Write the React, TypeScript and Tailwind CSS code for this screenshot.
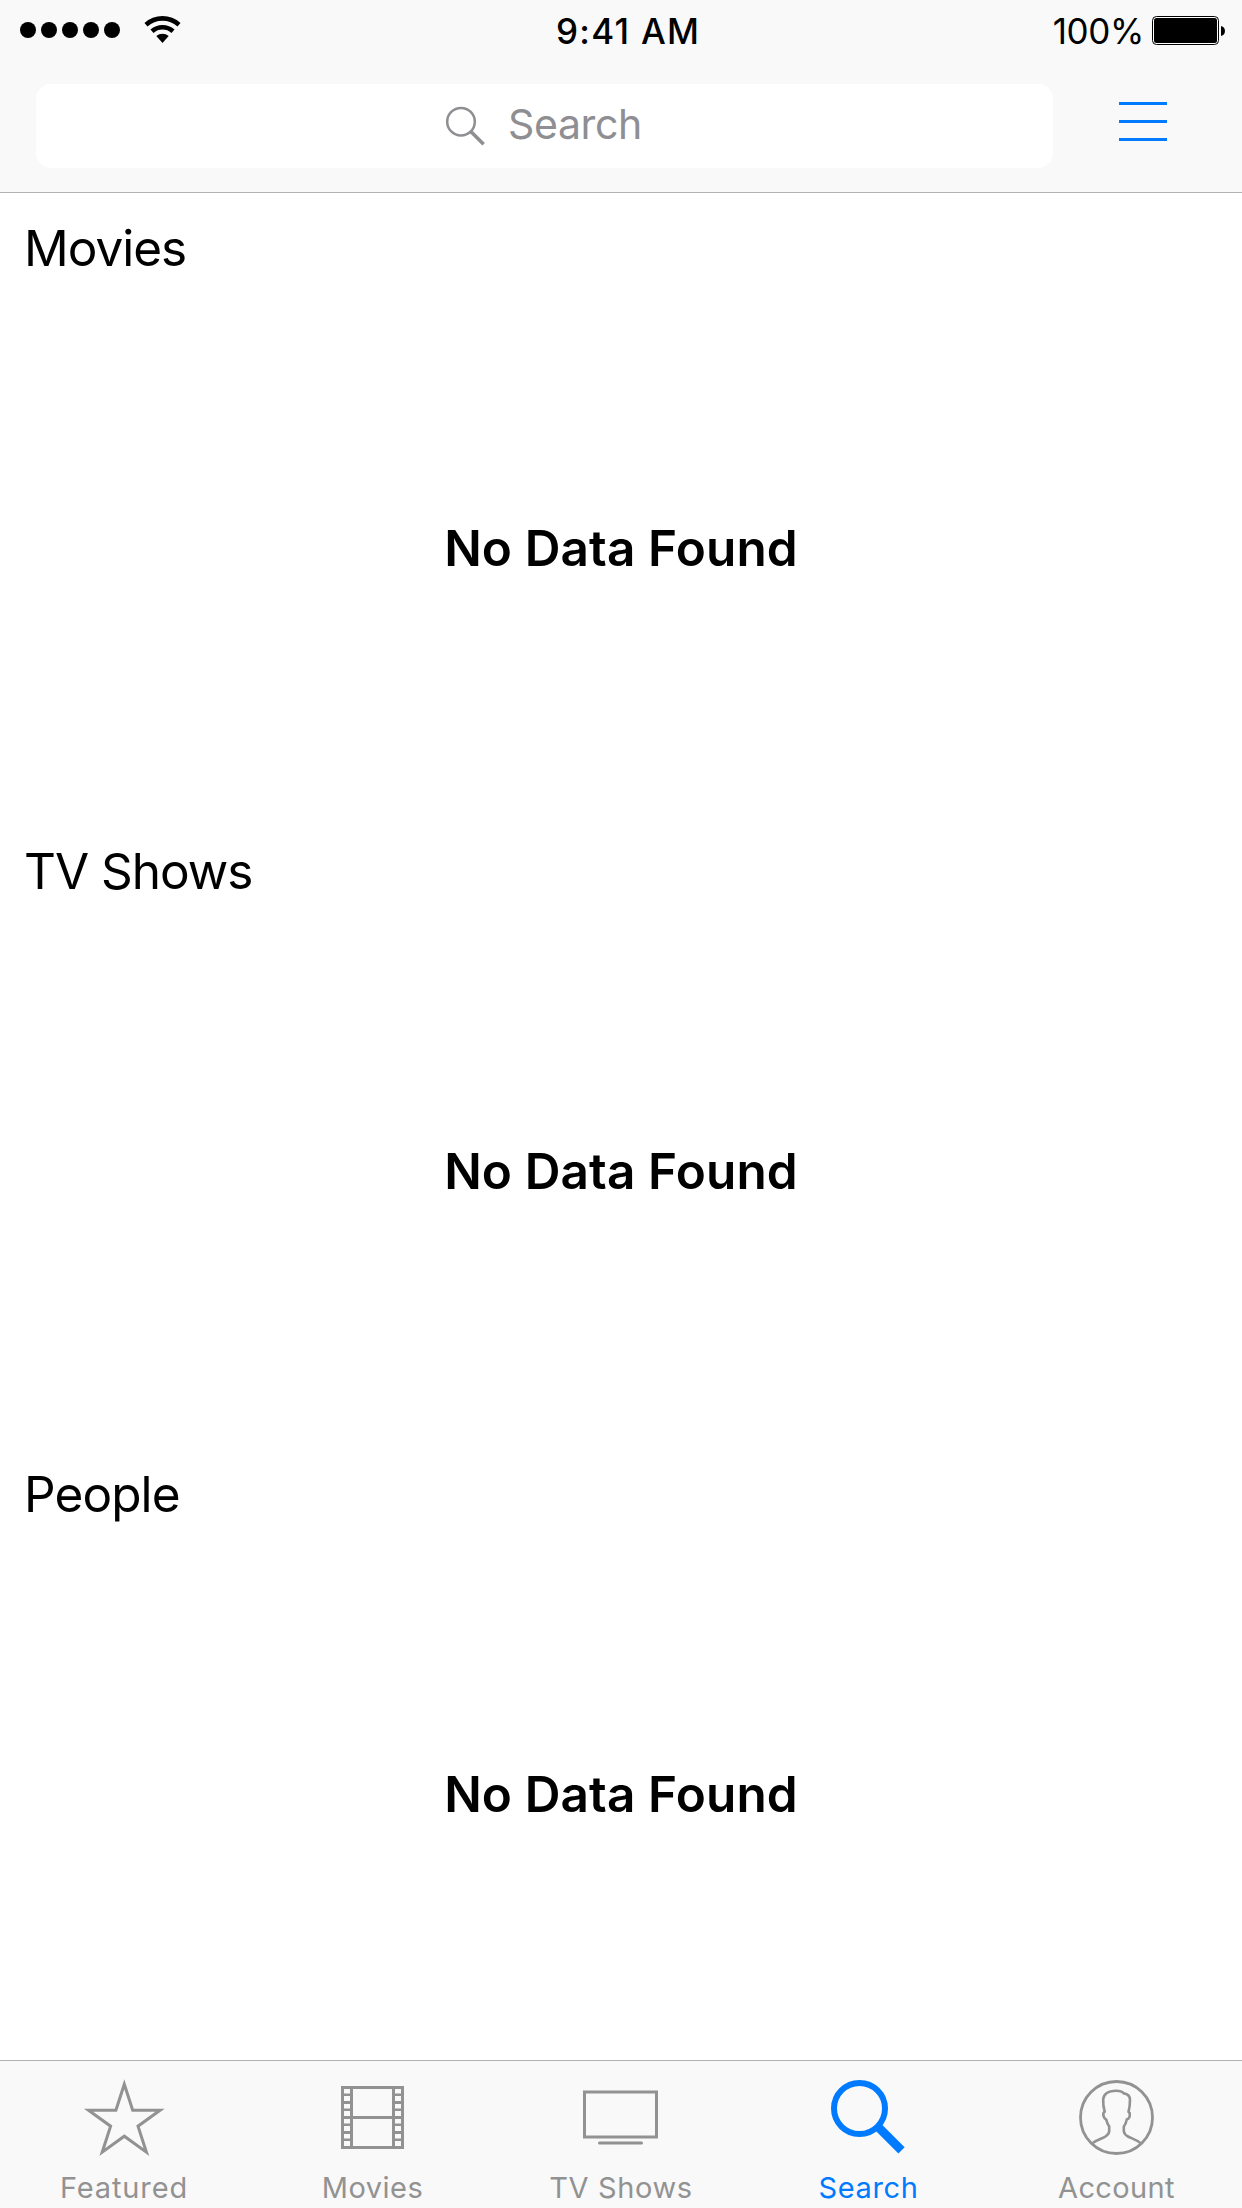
import type { ReactNode } from "react";

function SignalDots() {
  return (
    <div className="mt-[22px] flex gap-[5px]">
      {[0, 1, 2, 3, 4].map((i) => (
        <span key={i} className="size-4 rounded-full bg-black" />
      ))}
    </div>
  );
}

function WifiIcon() {
  return (
    <svg className="mt-4 ml-6" width="37" height="28" viewBox="0 0 37 28" fill="none" stroke="#000" strokeWidth="4.6">
      <path d="M2 8.7A24.7 24.7 0 0 1 35 8.7" />
      <path d="M8 15.3A15.7 15.7 0 0 1 29 15.3" />
      <path d="M18.5 27L12.3 20.1A9.3 9.3 0 0 1 24.7 20.1Z" fill="#000" stroke="none" />
    </svg>
  );
}

function BatteryIcon() {
  return (
    <svg className="mt-4 ml-2" width="73" height="29" viewBox="0 0 73 29">
      <rect x="0.5" y="0.5" width="66" height="28" rx="4" fill="#fff" stroke="#000" />
      <rect x="2" y="2" width="63" height="25" rx="2.5" fill="#000" />
      <path d="M69 10C74.300 11 74.300 19 69 20Z" fill="#000" />
    </svg>
  );
}

function StatusBar() {
  return (
    <div className="flex h-[60px] items-start pr-[17px] text-[35px] leading-9">
      <div className="flex w-[556px] pl-5">
        <SignalDots />
        <WifiIcon />
      </div>
      <span className="mt-[13px] font-medium tracking-[1.27px] whitespace-nowrap">9:41 AM</span>
      <span className="mt-[13px] ml-auto tracking-[-0.37px]">100%</span>
      <BatteryIcon />
    </div>
  );
}

function NavBar() {
  return (
    <header className="h-[193px] border-b border-[#b2b2b2] bg-[#f9f9f9]">
      <StatusBar />
      <div className="flex pt-6 pl-9">
        <div className="flex h-[84px] w-[1017px] rounded-[15px] bg-white pl-[410px] text-[#8e8e93]">
          <svg className="mt-[22px]" width="40" height="42" viewBox="0 0 40 42" fill="none" stroke="currentColor">
            <circle cx="15" cy="15.700" r="13.800" strokeWidth="2.500" />
            <path d="M24.800 25.500L37.600 38.300" strokeWidth="3.600" />
          </svg>
          <span className="ml-[22px] text-[41px] leading-[80px] tracking-[-0.35px]">Search</span>
        </div>
        <div className="mt-[18px] ml-[66px] flex w-12 flex-col gap-[15px]">
          <span className="h-[3px] bg-[#007aff]" />
          <span className="h-[3px] bg-[#007aff]" />
          <span className="h-[3px] bg-[#007aff]" />
        </div>
      </div>
    </header>
  );
}

function Section({ title, tracking }: { title: string; tracking: string }) {
  return (
    <section className="h-[623px] text-[49.5px]">
      <h2 className={`pl-6 leading-[110px] ${tracking}`}>{title}</h2>
      <p className="text-center leading-[490px] font-semibold tracking-[0.12px]">No Data Found</p>
    </section>
  );
}

type TabProps = { label: string; width: number; className: string; children: ReactNode };

function Tab({ label, width, className, children }: TabProps) {
  return (
    <div className={`flex flex-col items-center text-[29px] leading-9 ${className}`}>
      <svg width={width} height="109" viewBox={`0 0 ${width} 109`} fill="none" stroke="currentColor" strokeWidth="3">
        {children}
      </svg>
      <span className="whitespace-nowrap">{label}</span>
    </div>
  );
}

function TabBar() {
  return (
    <nav className="flex h-[148px] border-t border-[#b2b2b2] bg-[#f9f9f9] text-[#929292]">
      <Tab label="Featured" width={248} className="w-[248px] tracking-[0.88px]">
        <path
          strokeMiterlimit="10"
          d="M124.300 23.200L132.700 49.200H160.100L138 65.200L146.400 91.200L124.300 75.200L102.200 91.200L110.600 65.200L88.500 49.200H115.900Z"
        />
      </Tab>
      <Tab label="Movies" width={249} className="w-[249px] tracking-[0.49px]">
        <rect x="94.500" y="26.500" width="60" height="60" />
        <path d="M103.500 26V87M145.500 26V87M94 56.500H155M96 41.500H103M96 71.500H103M146 41.500H153M146 71.500H153" />
        <path
          strokeWidth="2.500"
          d="M96 33.750H103M96 48.750H103M96 63.750H103M96 78.750H103M146 33.750H153M146 48.750H153M146 63.750H153M146 78.750H153"
        />
      </Tab>
      <Tab label="TV Shows" width={248} className="w-[248px] tracking-[0.64px]">
        <rect x="87.500" y="31" width="72" height="45" />
        <path strokeLinecap="round" d="M102.500 82H144.500" />
      </Tab>
      <Tab label="Search" width={247} className="w-[249px] pr-[2px] tracking-[0.64px] text-[#007aff]">
        <circle cx="114.500" cy="47.500" r="25.500" strokeWidth="6" />
        <path strokeWidth="8.800" d="M133.500 66.300L156.500 89.300" />
      </Tab>
      <Tab label="Account" width={245} className="w-[245px] tracking-[0.36px]">
        <circle cx="122.500" cy="56.500" r="36" strokeWidth="2.800" />
        <path
          strokeWidth="2.600"
          strokeLinejoin="round"
          d="M98.700 82C103 78.800 108 77.800 111.500 75.500C114.500 73.500 115.200 72 115.200 70V65.500C113.700 63.500 113 61.500 112.300 58.800C109.500 57.500 109 53.500 109.500 51.800L110.700 50.700C109.500 47 109 42 109.200 38C110 32.500 115 29.800 122 29.700C126 29.700 128.500 30.800 129.800 32.400C134 33 136 35.500 136 39C136 43.500 135.500 47 134.500 50.900L135.700 52C136 54.500 135.500 57.800 132.700 58.600C132.200 61.500 131.300 63.800 129.800 65.500V70C130 72.500 131 74 134 75.500C138 77.500 142 78.500 146.300 82"
        />
      </Tab>
    </nav>
  );
}

export default function App() {
  return (
    <div className="flex h-[2208px] w-[1242px] flex-col overflow-hidden bg-white font-['Inter',sans-serif] text-black">
      <NavBar />
      <main className="h-[1867px] overflow-hidden">
        <Section title="Movies" tracking="tracking-[-1px]" />
        <Section title="TV Shows" tracking="tracking-[-1px]" />
        <Section title="People" tracking="tracking-[-0.9px]" />
      </main>
      <TabBar />
    </div>
  );
}
